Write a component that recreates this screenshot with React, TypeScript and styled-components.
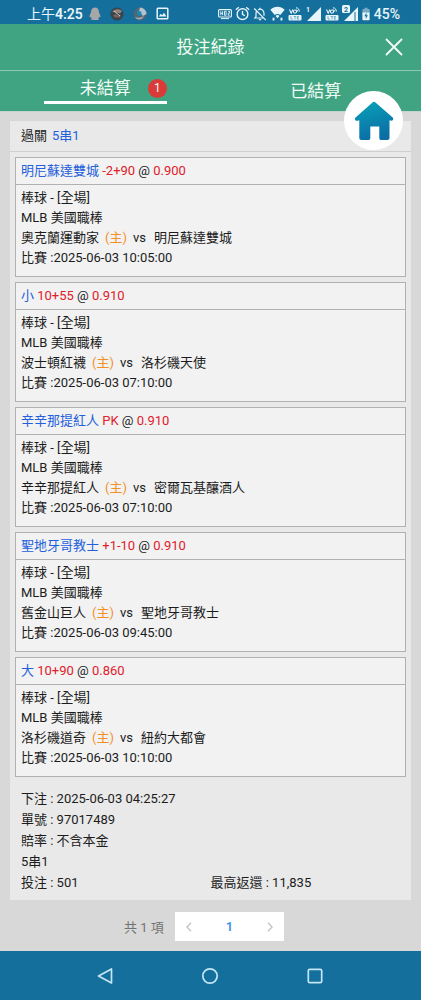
import React from "react";
import styled, { createGlobalStyle } from "styled-components";

const GlobalStyle = createGlobalStyle`
  *, *::before, *::after { box-sizing: border-box; }
  body {
    margin: 0;
    background: #d8d8d8;
    color: #1c1c1c;
    font-family: Roboto, "Noto Sans CJK TC", sans-serif;
    font-size: 13px;
  }
  button {
    font: inherit;
    color: inherit;
    background: none;
    border: 0;
    padding: 0;
    cursor: pointer;
  }
  h1, h2, p { margin: 0; font-size: inherit; font-weight: 400; }
  svg { display: block; flex: none; }
`;

const Page = styled.div`
  position: relative;
  min-height: 100vh;
  display: flex;
  flex-direction: column;
`;

const StatusBar = styled.div`
  height: 24px;
  padding: 3px 21px 0 27px;
  display: flex;
  align-items: center;
  justify-content: space-between;
  background: #146f9c;
  color: #e8f5fa;
  font-size: 14px;
  line-height: 20px;
`;

const StatusGroup = styled.div<{ $gap: number }>`
  display: flex;
  align-items: center;
  gap: ${(p) => p.$gap}px;
`;

const Notifications = styled.div`
  display: flex;
  align-items: center;
  gap: 9px;
`;

const Clock = styled.span`
  font-weight: 400;
  b { font-weight: 600; }
`;

const Battery = styled.span`
  margin-left: 1px;
  font-weight: 500;
`;

const Header = styled.header`
  display: grid;
  grid-template-columns: 1fr auto 1fr;
  align-items: center;
  height: 47px;
  border-bottom: 1px solid #8ccab3;
  background: #40a482;
  color: #f0fbf6;
`;

const Title = styled.h1`
  grid-column: 2;
  font-size: 17px;
  line-height: 24px;
`;

const CloseButton = styled.button`
  justify-self: end;
  margin-right: 18px;
`;

const Tabs = styled.div`
  display: grid;
  grid-template-columns: 1fr 1fr;
  justify-items: center;
  height: 41px;
  border-bottom: 1px solid #c3d5ce;
  background: #40a482;
  color: #f0fbf6;
`;

const Tab = styled.button<{ $active?: boolean }>`
  position: relative;
  width: 123px;
  height: ${(p) => (p.$active ? 33 : 40)}px;
  padding-top: ${(p) => (p.$active ? 3 : 0)}px;
  border-bottom: ${(p) => (p.$active ? "3px solid #fff" : "0")};
  font-size: 17px;
  line-height: 24px;
`;

const Badge = styled.span`
  position: absolute;
  top: 8px;
  right: 0;
  width: 19px;
  height: 19px;
  border-radius: 50%;
  background: #db3b38;
  font-size: 12px;
  line-height: 19px;
  text-align: center;
`;

const HomeButton = styled.button`
  position: absolute;
  top: 91px;
  right: 18px;
  width: 59px;
  height: 59px;
  display: flex;
  align-items: center;
  justify-content: center;
  border-radius: 50%;
  background: #fff;
`;

const Main = styled.main`
  flex: 1;
  padding: 9px 10px;
`;

const Slip = styled.article`
  background: #e9e9e9;
`;

const SlipHead = styled.h2`
  display: flex;
  gap: 5px;
  height: 31px;
  padding: 0 11px;
  border-bottom: 1px solid #cfcfcf;
  line-height: 30px;
`;

const Legs = styled.div`
  display: flex;
  flex-direction: column;
  gap: 5px;
  padding: 5px 5px 0;
`;

const Leg = styled.section`
  border: 1px solid #b1b1b3;
  background: #f2f2f2;
`;

const LegHead = styled.p`
  padding: 0 5px;
  border-bottom: 1px solid #b1b1b3;
  line-height: 26px;
`;

const LegBody = styled.div`
  height: 91px;
  padding: 3px 5px 0;
  line-height: 20px;
`;

const Pick = styled.span`
  color: #2460dc;
`;

const Odds = styled.span`
  color: #e0202a;
`;

const HomeSide = styled.span`
  margin: 0 6px;
  color: #f39026;
`;

const Away = styled.span`
  margin-left: 8px;
`;

const Summary = styled.div`
  padding: 11px 11px 7px;
  line-height: 21px;
`;

const SummaryRow = styled.div`
  display: grid;
  grid-template-columns: 1fr 1fr;
`;

const Pager = styled.nav`
  display: flex;
  align-items: center;
  justify-content: center;
  gap: 11px;
  padding: 12px 13px 0 0;
  color: #727272;
`;

const PagerBox = styled.div`
  display: flex;
  align-items: center;
  justify-content: space-between;
  width: 109px;
  height: 29px;
  background: #fff;
  color: #3f93e6;
  font-weight: 600;
`;

const PagerButton = styled.button`
  display: flex;
  align-items: center;
  justify-content: center;
  width: 28px;
  height: 29px;
`;

const SystemNav = styled.nav`
  display: flex;
  align-items: center;
  justify-content: center;
  gap: 81px;
  height: 49px;
  padding-right: 2px;
  background: #146f9c;
`;

const NavButton = styled.button`
  width: 24px;
  height: 24px;
`;

const ink = "#e8f5fa";

function VoLte() {
  return (
    <svg width="14" height="14" viewBox="0 0 14 14" fill="none" stroke={ink}>
      <path d="M1.5 2.5 3.2 6.2 4.9 2.5" strokeWidth="1.1" />
      <circle cx="7" cy="4.6" r="1.6" strokeWidth="1.1" />
      <path d="M8 .8C10 .8 11.300 2.200 11.300 4.600M8.600 2.600c.8.3 1 .9 1 2" strokeWidth="1" />
      <rect x=".5" y="8" width="13" height="5.500" rx="1" fill={ink} stroke="none" />
      <path d="M3 9.200v2.900h1.700M5.700 9.500h2.600M7 9.500v2.900M11 9.500H9.400v2.700H11M9.400 10.800h1.400" stroke="#4a93b6" strokeWidth=".7" />
    </svg>
  );
}

function Signal({ label, boxed }: { label: string; boxed?: boolean }) {
  return (
    <svg width="17" height="18" viewBox="0 0 17 18">
      <path d="M2 16 16 2v14z" fill={ink} />
      {boxed && (
        <>
          <path d="M13 7v9" stroke="#146f9c" strokeWidth="1" />
          <rect x="0" y="0" width="8" height="8" rx="1.500" fill={ink} />
        </>
      )}
      <text x={boxed ? 4 : 3} y="6.600" fontSize="7" fontWeight="700" textAnchor="middle" fill={boxed ? "#146f9c" : ink}>
        {label}
      </text>
    </svg>
  );
}

function NotificationIcons() {
  return (
    <Notifications>
      <svg width="12" height="14" viewBox="0 0 12 14" fill="#a5a7a8">
        <path d="M6 .5c2.500 0 3.900 1.800 3.900 4.200 0 1.200 1.700 3 1.600 5.100 0 .9-.7.7-1.300 0-.2 1-.7 1.600-1 1.900.9.3.8 1.300-.2 1.300H3c-1 0-1.100-1-.2-1.300-.3-.3-.8-.9-1-1.900-.6.7-1.300.9-1.300 0C.4 7.700 2.100 5.900 2.100 4.700 2.100 2.300 3.500.5 6 .5z" />
      </svg>
      <svg width="14" height="14" viewBox="0 0 14 14">
        <circle cx="7" cy="7" r="6.500" fill="#3b4248" />
        <path d="M2 5c2-3 7-4 10-1L10 6.500 6 5.200z" fill="#8d8580" />
        <path d="M3 8.500 6 7l2 2 3-1-1 2.500H5z" fill="#77655f" />
        <path d="m4 4 6 5" stroke="#d3d3cf" strokeWidth="1" />
      </svg>
      <svg width="14" height="14" viewBox="0 0 14 14">
        <circle cx="7" cy="7" r="6.500" fill="#55646f" />
        <path d="M7 .5a6.500 6.500 0 0 1 6.500 6.500L10 9 6 4z" fill="#b4c3cb" />
        <path d="M4 3 8.500 5 8 9 4.500 8.500z" fill="#1689bb" />
        <path d="M2 10c3 1 6 1 9-1-1 3-6 5.500-9 1z" fill="#9bafba" />
      </svg>
      <svg width="13" height="13" viewBox="0 0 13 13" fill="none" stroke={ink}>
        <rect x="1.200" y="1.200" width="10.600" height="10.600" rx=".8" strokeWidth="1.500" />
        <path d="m2.800 9.500 2-2.800 1.300 1.500 1.900-2.500 2.500 3.800z" fill={ink} stroke="none" />
      </svg>
    </Notifications>
  );
}

function SystemIcons() {
  return (
    <>
      <svg width="14" height="12" viewBox="0 0 14 12" fill="none" stroke={ink}>
        <rect x=".6" y="1.600" width="12.800" height="7.400" rx="1" strokeWidth="1.100" />
        <path d="M2.800 3.300v4M2.800 5.300h1.700M4.600 3.300v4M6.500 3.300h1.600v4H6.500zM10 3.300h1.500v2H10.200v2h1.500" strokeWidth=".9" />
        <path d="M3 10.600h8" strokeWidth="1" />
      </svg>
      <svg width="15" height="15" viewBox="0 0 14 14" fill="none" stroke={ink} strokeWidth="1.300">
        <circle cx="7" cy="7.600" r="5" />
        <path d="M7 4.600v3.200l2.200 1.300M.8 3.500 3.600 1.100M13.200 3.500l-2.800-2.400" />
      </svg>
      <svg width="14" height="14" viewBox="0 0 14 14" fill="none" stroke={ink} strokeWidth="1.200">
        <path d="M3.400 4.500C3 5.200 3 6 3 6.500v3L1.800 11h9.400M5 2.900C8 1.200 11 3 11 6.500v2.200M7 .8v1.500M5.800 12.600h2.400M1.200 1.500l11.600 11.600" />
      </svg>
      <svg width="15" height="15" viewBox="0 0 14 14" fill={ink}>
        <path d="M.3 3.500C4-.3 10-.3 13.700 3.500L9.600 8.400C8 7.200 6 7.200 4.400 8.400z" />
        <path d="m5.200 9.300 1.800 2.200 1.800-2.200C8 8.200 6 8.200 5.200 9.300zM2.400 11h1.800v2.500H2.400zM9.800 11h1.800v2.500H9.800z" />
      </svg>
      <VoLte />
      <Signal label="1" />
      <VoLte />
      <Signal label="2" boxed />
      <svg width="8" height="14" viewBox="0 0 8 14">
        <path d="M2.500.8h3V2H7a.6.6 0 0 1 .6.600V6H.4V2.600A.6.600 0 0 1 1 2h1.500z" fill="#76acc5" />
        <path d="M.4 5.500h7.200v7a.8.8 0 0 1-.8.800H1.200a.8.8 0 0 1-.8-.8z" fill={ink} />
        <path d="M4.600 5.500 2.300 9.300h1.500v2.600l2.100-3.700H4.400z" fill="#146f9c" />
      </svg>
    </>
  );
}

interface LegData {
  pick: string;
  line: string;
  odds: string;
  home: string;
  away: string;
  time: string;
}

const legs: LegData[] = [
  { pick: "明尼蘇達雙城", line: "-2+90", odds: "0.900", home: "奧克蘭運動家", away: "明尼蘇達雙城", time: "2025-06-03 10:05:00" },
  { pick: "小", line: "10+55", odds: "0.910", home: "波士頓紅襪", away: "洛杉磯天使", time: "2025-06-03 07:10:00" },
  { pick: "辛辛那提紅人", line: "PK", odds: "0.910", home: "辛辛那提紅人", away: "密爾瓦基釀酒人", time: "2025-06-03 07:10:00" },
  { pick: "聖地牙哥教士", line: "+1-10", odds: "0.910", home: "舊金山巨人", away: "聖地牙哥教士", time: "2025-06-03 09:45:00" },
  { pick: "大", line: "10+90", odds: "0.860", home: "洛杉磯道奇", away: "紐約大都會", time: "2025-06-03 10:10:00" },
];

export default function App() {
  return (
    <Page lang="zh-Hant">
      <GlobalStyle />
      <StatusBar>
        <StatusGroup $gap={6}>
          <Clock>
            上午<b>4:25</b>
          </Clock>
          <NotificationIcons />
        </StatusGroup>
        <StatusGroup $gap={3}>
          <SystemIcons />
          <Battery>45%</Battery>
        </StatusGroup>
      </StatusBar>

      <Header>
        <Title>投注紀錄</Title>
        <CloseButton aria-label="關閉">
          <svg width="18" height="18" viewBox="0 0 18 18" stroke="#f4fcf8" strokeWidth="1.800" strokeLinecap="round">
            <path d="m1.500 1.500 15 15M16.500 1.500l-15 15" />
          </svg>
        </CloseButton>
      </Header>
      <Tabs role="tablist">
        <Tab role="tab" aria-selected="true" $active>
          未結算<Badge>1</Badge>
        </Tab>
        <Tab role="tab" aria-selected="false">
          已結算
        </Tab>
      </Tabs>
      <HomeButton aria-label="首頁">
        <svg width="40" height="40" viewBox="0 0 40 40">
          <defs>
            <linearGradient id="roof" x1="0" y1="0" x2="0.300" y2="1">
              <stop offset="0" stopColor="#08a3b8" />
              <stop offset="1" stopColor="#0b6fa6" />
            </linearGradient>
          </defs>
          <path
            d="M18.800 1.200q1.200-.9 2.400 0L38.700 16.500q1 1 .3 2.200-.8 1.400-2.400.9L35.500 19.300V37q0 2-2 2H27q-1.700 0-1.700-1.700V25.500h-9V37.300q0 1.700-1.700 1.700H7.300q-2 0-2-2V19.300l-1.600.5q-1.500.3-2.500-.9-.8-1.300.3-2.400z"
            fill="url(#roof)"
          />
        </svg>
      </HomeButton>

      <Main>
        <Slip>
          <SlipHead>
            <span>過關</span>
            <Pick>5串1</Pick>
          </SlipHead>
          <Legs>
            {legs.map((leg) => (
              <Leg key={leg.home}>
                <LegHead>
                  <Pick>{leg.pick}</Pick> <Odds>{leg.line}</Odds> @ <Odds>{leg.odds}</Odds>
                </LegHead>
                <LegBody>
                  <p>棒球 - [全場]</p>
                  <p>MLB 美國職棒</p>
                  <p>
                    {leg.home}
                    <HomeSide>(主)</HomeSide>vs<Away>{leg.away}</Away>
                  </p>
                  <p>比賽 :{leg.time}</p>
                </LegBody>
              </Leg>
            ))}
          </Legs>
          <Summary>
            <p>下注 : 2025-06-03 04:25:27</p>
            <p>單號 : 97017489</p>
            <p>賠率 : 不含本金</p>
            <p>5串1</p>
            <SummaryRow>
              <span>投注 : 501</span>
              <span>最高返還 : 11,835</span>
            </SummaryRow>
          </Summary>
        </Slip>
        <Pager aria-label="分頁">
          <span>共 1 項</span>
          <PagerBox>
            <PagerButton aria-label="上一頁">
              <svg width="6" height="10" viewBox="0 0 6 10" fill="none" stroke="#c4c4c4" strokeWidth="1.400">
                <path d="M5 .8.9 5 5 9.200" />
              </svg>
            </PagerButton>
            <PagerButton aria-current="page">1</PagerButton>
            <PagerButton aria-label="下一頁">
              <svg width="6" height="10" viewBox="0 0 6 10" fill="none" stroke="#c4c4c4" strokeWidth="1.400">
                <path d="M1 .8 5.100 5 1 9.200" />
              </svg>
            </PagerButton>
          </PagerBox>
        </Pager>
      </Main>

      <SystemNav>
        <NavButton aria-label="返回">
          <svg width="24" height="24" viewBox="0 0 24 24" fill="none" stroke="#c4e6f6" strokeWidth="1.700" strokeLinejoin="round">
            <path d="M5.500 12 18.500 5v14z" />
          </svg>
        </NavButton>
        <NavButton aria-label="主畫面">
          <svg width="24" height="24" viewBox="0 0 24 24" fill="none" stroke="#c4e6f6" strokeWidth="1.700">
            <circle cx="12" cy="12" r="7.200" />
          </svg>
        </NavButton>
        <NavButton aria-label="最近使用">
          <svg width="24" height="24" viewBox="0 0 24 24" fill="none" stroke="#c4e6f6" strokeWidth="1.700">
            <rect x="5.300" y="5.300" width="13.400" height="13.400" rx="1.500" />
          </svg>
        </NavButton>
      </SystemNav>
    </Page>
  );
}
